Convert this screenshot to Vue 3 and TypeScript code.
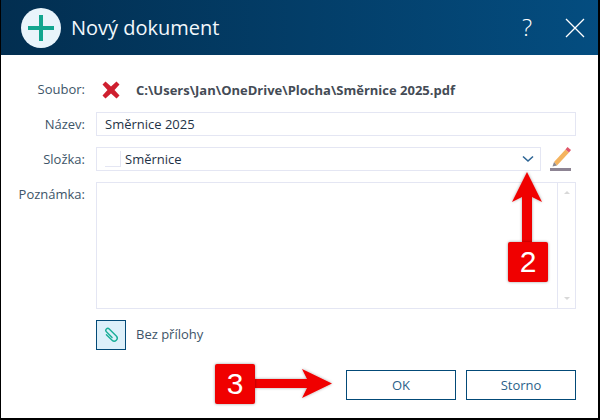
<script setup lang="ts">
const title: string = 'Nový dokument'
</script>

<template>
  <div class="dialog">
    <header class="head">
      <div class="logo">
        <svg width="40" height="40" viewBox="0 0 40 40">
          <circle cx="20" cy="20" r="20" fill="#e9f4fb" />
          <path d="M18 7h4v11h11v4H22v11h-4V22H7v-4h11z" fill="#12a58f" />
        </svg>
      </div>
      <h1 class="title">{{ title }}</h1>
      <span class="help">?</span>
      <svg class="close" width="20" height="20" viewBox="0 0 20 20">
        <path d="M1 1l18 18M19 1L1 19" stroke="#fff" stroke-width="1.300" fill="none" />
      </svg>
    </header>

    <main class="body">
      <div class="form">
        <label class="lab first">Soubor:</label>
        <div class="file">
          <svg width="18" height="18" viewBox="0 0 18 18">
            <path d="M3.500 .5L9 5.500 14.500 .5 17.500 3.500 12.500 9l5 5.500-3 3L9 12.500l-5.500 5-3-3L5.500 9 .5 3.500z" fill="#cf1f2f" />
          </svg>
          <span class="path">C:\Users\Jan\OneDrive\Plocha\Směrnice 2025.pdf</span>
        </div>

        <label class="lab">Název:</label>
        <div class="input">Směrnice 2025</div>

        <label class="lab">Složka:</label>
        <div class="folder-row">
          <div class="input select">
            <span class="swatch"></span>
            <span class="grow">Směrnice</span>
            <svg width="12" height="8" viewBox="0 0 12 8">
              <path d="M1 1.500l5 4.500 5-4.500" stroke="#2d6595" stroke-width="1.600" fill="none" />
            </svg>
          </div>
          <svg class="pencil" width="24" height="26" viewBox="0 0 24 26">
            <path d="M5 17L16.500 4.500l3.500 3L8 20.500z" fill="#f4b35e" />
            <path d="M16.500 4.500l2-2.500 3.500 3-2 2.500z" fill="#e0566a" />
            <path d="M3.500 21.500l1.500-4.500 3 3.500z" fill="#8d8a90" />
            <rect x="1" y="23" width="21" height="3" fill="#8d8493" />
          </svg>
        </div>

        <label class="lab">Poznámka:</label>
        <div class="note">
          <div class="scroll">
            <span class="tri up"></span>
            <span class="tri down"></span>
          </div>
        </div>

        <span></span>
        <div class="attach">
          <button class="clip" type="button">
            <svg width="20" height="20" viewBox="-10 -10 20 20">
              <path transform="rotate(-45)" d="M-3 -3.500V4.500a3 3 0 0 0 6 0V-5.500a2 2 0 0 0-4 0V2.500" stroke="#19ae98" stroke-width="1.400" fill="none" stroke-linecap="round" />
            </svg>
          </button>
          <span class="none">Bez přílohy</span>
        </div>
      </div>

      <footer class="actions">
        <button class="btn" type="button">OK</button>
        <button class="btn" type="button">Storno</button>
      </footer>
    </main>

    <!-- annotations lying over the dialog -->
    <svg class="overlay" width="600" height="420" viewBox="0 0 600 420">
      <defs>
        <filter id="sh" x="-30%" y="-30%" width="160%" height="160%">
          <feDropShadow dx="0" dy="0" stdDeviation="1.500" flood-color="#000" flood-opacity="0.35" />
        </filter>
      </defs>
      <g filter="url(#sh)" fill="#f00000">
        <path d="M527 172l15 30-10-5v45h-10v-45l-10 5z" />
        <path d="M250 379h57l-5-10 30 14.500-30 14.500 5-10h-57z" />
      </g>
    </svg>
    <div class="badge two">2</div>
    <div class="badge three">3</div>
  </div>
</template>

<style>
html, body { margin: 0; }
</style>

<style scoped>
.dialog {
  position: relative;
  box-sizing: border-box;
  width: 600px;
  height: 420px;
  display: flex;
  flex-direction: column;
  background: #fff;
  border-left: 1px solid #000;
  border-right: 2px solid #000;
  border-bottom: 2px solid #000;
  font-family: "Open Sans", sans-serif;
  font-size: 13px;
  color: #34495e;
  overflow: hidden;
}
.head {
  height: 55px;
  margin: 0 -2px 0 -1px;
  padding: 0 15px 0 21px;
  display: flex;
  align-items: center;
  background: linear-gradient(90deg, #022e50, #044d80);
  color: #fff;
  flex: none;
}
.logo { width: 40px; height: 40px; }
.logo svg { display: block; }
.title {
  margin: 0 0 0 10px;
  flex: 1;
  font-size: 20px;
  font-weight: 400;
  color: #f2f8fc;
}
.help { font-size: 24px; font-weight: 300; margin-right: 33px; margin-top: -3px; }
.close { margin-right: 0; }
.body {
  flex: 1;
  padding: 23px 22px 18px 0;
  display: flex;
  flex-direction: column;
}
.form {
  display: grid;
  grid-template-columns: 84px 1fr;
  column-gap: 11px;
  row-gap: 11px;
  grid-template-rows: 23px 24px 24px 127px 30px;
}
.lab { text-align: right; line-height: 24px; color: #3d5468; }
.lab.first { line-height: 22px; }
.file { display: flex; align-items: center; gap: 16px; padding-left: 6px; }
.path { font-weight: 700; color: #444b55; }
.input {
  box-sizing: border-box;
  height: 24px;
  border: 1px solid #e4e6f3;
  padding: 0 8px;
  line-height: 22px;
  color: #1f3347;
}
.folder-row { display: flex; align-items: center; }
.select {
  width: 445px;
  display: flex;
  align-items: center;
  gap: 4px;
  padding: 0 6px 0 8px;
}
.swatch {
  width: 15px;
  height: 15px;
  border-right: 1px solid #e4e6f3;
  border-bottom: 1px solid #e4e6f3;
}
.grow { flex: 1; }
.pencil { margin-left: 8px; margin-top: -2px; }
.note {
  box-sizing: border-box;
  border: 1px solid #e4e6f3;
  display: flex;
  justify-content: flex-end;
}
.scroll {
  width: 17px;
  border-left: 1px solid #e4e6f3;
  display: flex;
  flex-direction: column;
  justify-content: space-between;
  align-items: center;
  padding: 8px 0;
}
.tri { width: 0; height: 0; border-left: 3px solid transparent; border-right: 3px solid transparent; }
.tri.up { border-bottom: 3px solid #d8d8d8; }
.tri.down { border-top: 3px solid #d8d8d8; }
.attach { display: flex; align-items: center; gap: 10px; }
.none { color: #3d5468; margin-top: -2px; }
.clip {
  box-sizing: border-box;
  width: 30px;
  height: 30px;
  padding: 0;
  display: flex;
  align-items: center;
  justify-content: center;
  background: #ddf0fa;
  border: 1px solid #034a78;
}
.actions {
  margin-top: 20px;
  display: flex;
  justify-content: flex-end;
  gap: 10px;
}
.btn {
  box-sizing: border-box;
  width: 110px;
  height: 30px;
  background: #fff;
  border: 1px solid #034a78;
  font: inherit;
  color: #2b5f8a;
}
.overlay { position: absolute; left: -1px; top: 0; pointer-events: none; }
.badge {
  position: absolute;
  width: 40px;
  height: 40px;
  background: #f00000;
  border-radius: 2px;
  box-shadow: 0 0 3px rgba(0,0,0,.4);
  color: #fff;
  font-family: "Liberation Sans", sans-serif;
  font-size: 30px;
  line-height: 40px;
  text-align: center;
}
.two { left: 507px; top: 242px; }
.three { left: 214px; top: 364px; }
</style>
